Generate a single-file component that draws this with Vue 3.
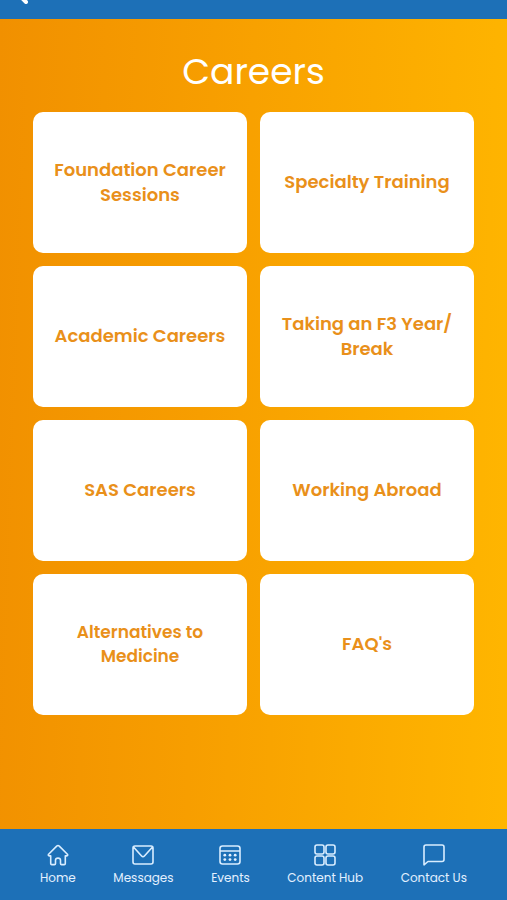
<script setup>
const topics = [
  { title: 'Foundation Career Sessions' },
  { title: 'Specialty Training' },
  { title: 'Academic Careers' },
  { title: 'Taking an F3 Year/ Break' },
  { title: 'SAS Careers' },
  { title: 'Working Abroad' },
  { title: 'Alternatives to Medicine', compact: true },
  { title: "FAQ's" },
]

const tabs = [
  {
    label: 'Home',
    icon: 'M1.6 10.2 9.7 2.1Q11 .9 12.3 2.1L20.4 10.2Q21.3 11.5 19.7 11.9H18.3V19.5Q18.3 20.6 17.2 20.6H14.6Q13.5 20.6 13.5 19.5V16.3Q13.5 14.1 11 14.1T8.5 16.3V19.5Q8.5 20.6 7.4 20.6H4.8Q3.7 20.6 3.7 19.5V11.9H2.3Q.7 11.5 1.6 10.2Z',
  },
  {
    label: 'Messages',
    icon: 'M3 2H19Q21 2 21 4V18Q21 20 19 20H3Q1 20 1 18V4Q1 2 3 2ZM1.7 3.2 9.6 12Q11 13.5 12.4 12L20.3 3.2',
  },
  {
    label: 'Events',
    icon: 'M3.5 2H18.5Q21 2 21 4.5V17.5Q21 20 18.5 20H3.5Q1 20 1 17.5V4.5Q1 2 3.5 2ZM1 7H21',
    dots: true,
  },
  {
    label: 'Content Hub',
    icon: 'M3 1H8Q10 1 10 3V8Q10 10 8 10H3Q1 10 1 8V3Q1 1 3 1ZM14 1H19Q21 1 21 3V8Q21 10 19 10H14Q12 10 12 8V3Q12 1 14 1ZM3 12H8Q10 12 10 14V19Q10 21 8 21H3Q1 21 1 19V14Q1 12 3 12ZM14 12H19Q21 12 21 14V19Q21 21 19 21H14Q12 21 12 19V14Q12 12 14 12Z',
  },
  {
    label: 'Contact Us',
    icon: 'M3 1H19Q21 1 21 3V15.5Q21 17.5 19 17.5H5L1 20.8V3Q1 1 3 1Z',
  },
]
const dots = [5.8, 11, 16.2]
</script>

<template>
  <div class="screen">
    <header class="topbar">
      <button class="back" type="button" aria-label="Back">
        <svg viewBox="0 0 12 20" aria-hidden="true"><path d="M10 2 2 10l8 8" /></svg>
      </button>
    </header>
    <main class="content">
      <h1>Careers</h1>
      <nav class="grid" aria-label="Careers">
        <a
          v-for="topic in topics"
          :key="topic.title"
          href="#"
          class="card"
          :class="{ compact: topic.compact }"
        >{{ topic.title }}</a>
      </nav>
    </main>
    <nav class="tabs" aria-label="Main">
      <a v-for="tab in tabs" :key="tab.label" href="#" class="tab">
        <svg viewBox="0 0 22 22" aria-hidden="true">
          <path :d="tab.icon" />
          <g v-if="tab.dots" class="dots">
            <template v-for="x in dots" :key="x">
              <circle :cx="x" cy="11.2" r="1.4" />
              <circle :cx="x" cy="15.6" r="1.4" />
            </template>
          </g>
        </svg>
        <span>{{ tab.label }}</span>
      </a>
    </nav>
  </div>
</template>

<style>
body {
  margin: 0;
}
</style>

<style scoped>
.screen {
  display: flex;
  flex-direction: column;
  min-height: 100vh;
  background: linear-gradient(92deg, #f19000 0%, #f79e00 40%, #ffb600 100%);
  font-family: Poppins, Inter, "Open Sans", sans-serif;
}
.topbar {
  display: flex;
  align-items: flex-end;
  height: 19px;
  padding: 0 16px;
  background: #1d70b7;
}
.back {
  display: flex;
  margin-bottom: 15px;
  padding: 0;
  border: 0;
  background: none;
}
.back svg {
  width: 12px;
  height: 20px;
  fill: none;
  stroke: #fff;
  stroke-width: 4;
  stroke-linecap: round;
}
.content {
  flex: 1;
  padding: 25px 33px 32px;
}
h1 {
  margin: 0 0 12px;
  color: #fff;
  font-size: 36px;
  line-height: 56px;
  font-weight: 400;
  text-align: center;
}
.grid {
  display: grid;
  grid-template-columns: 1fr 1fr;
  gap: 13px;
}
.card {
  display: flex;
  align-items: center;
  justify-content: center;
  box-sizing: border-box;
  min-height: 141px;
  padding: 12px 16px 14px;
  border-radius: 10px;
  background: #fff;
  color: #e9901a;
  font-size: 18px;
  line-height: 25px;
  font-weight: 600;
  text-align: center;
  text-decoration: none;
}
.compact {
  padding: 12px 36px 14px;
  font-size: 17px;
  line-height: 24px;
}
.tabs {
  display: flex;
  justify-content: space-between;
  padding: 15px 40px 14px;
  background: #1d70b7;
}
.tab {
  display: flex;
  flex-direction: column;
  align-items: center;
  gap: 3px;
  color: #e4f1ff;
  font-size: 12px;
  line-height: 17px;
  text-decoration: none;
  white-space: nowrap;
}
.tab svg {
  width: 22px;
  height: 22px;
  fill: none;
  stroke: #d9edff;
  stroke-width: 1.6;
  stroke-linejoin: round;
  stroke-linecap: round;
}
.tab .dots {
  fill: #e4f1ff;
  stroke: none;
}
</style>
